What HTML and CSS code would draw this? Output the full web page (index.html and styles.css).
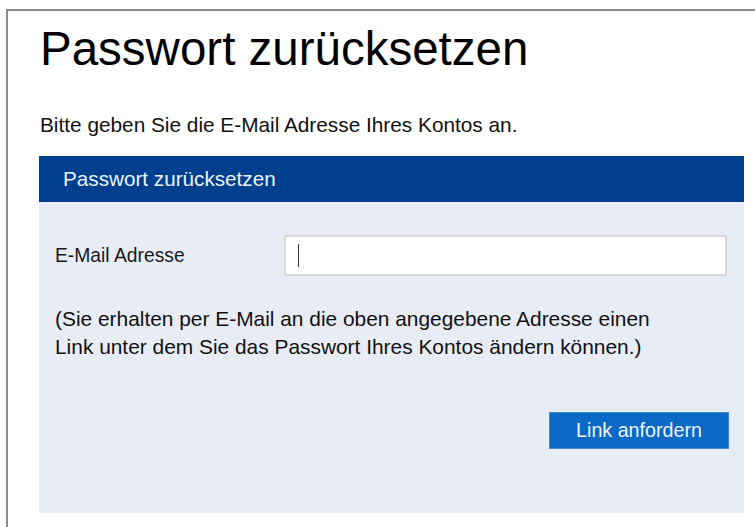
FILE: index.html
```html
<!DOCTYPE html>
<html lang="de">
<head>
<meta charset="utf-8">
<title>Passwort zurücksetzen</title>
<link rel="stylesheet" href="styles.css">
</head>
<body>
<div class="frame">
  <h1 class="title">Passwort zurücksetzen</h1>
  <p class="intro">Bitte geben Sie die E-Mail Adresse Ihres Kontos an.</p>
  <section class="panel">
    <div class="panel-head">Passwort zurücksetzen</div>
    <div class="panel-body">
      <div class="row">
        <label class="label" for="email">E-Mail Adresse</label>
        <div class="field" id="email"><span class="caret"></span></div>
      </div>
      <p class="note">(Sie erhalten per E-Mail an die oben angegebene Adresse einen<br>Link unter dem Sie das Passwort Ihres Kontos ändern können.)</p>
      <div class="actions">
        <button class="btn" type="button">Link anfordern</button>
      </div>
    </div>
  </section>
</div>
</body>
</html>
```

FILE: styles.css
```css
html, body {
  margin: 0;
  padding: 0;
  background: #ffffff;
  height: 100%;
}

body {
  font-family: "Liberation Sans", Arial, sans-serif;
  color: #111111;
  overflow: hidden;
}

.frame {
  box-sizing: border-box;
  height: calc(100% - 9px);
  margin: 9px 0 0 6px;
  border-top: 2px solid #8c8c8c;
  border-left: 2px solid #8c8c8c;
  padding: 10px 11px 0 31px;
}

.title {
  margin: 0;
  font-size: 47.5px;
  line-height: 56px;
  font-weight: normal;
  color: #000000;
  padding-left: 1px;
}

.intro {
  margin: 36px 0 19px;
  font-size: 20.8px;
  line-height: 24px;
  color: #111111;
  padding-left: 1px;
}

.panel {
  background: #e8ecf4;
}

.panel-head {
  background: #003f8e;
  color: #eef2fa;
  height: 46px;
  display: flex;
  align-items: center;
  padding-left: 24px;
  font-size: 20.7px;
}

.panel-body {
  padding: 33px 17px 64px 16px;
}

.row {
  display: flex;
  align-items: center;
}

.label {
  width: 229px;
  font-size: 19.3px;
  color: #1a1a1a;
}

.field {
  flex: 1;
  height: 37px;
  background: #ffffff;
  border: 2px solid #d8d8d8;
  display: flex;
  align-items: center;
  padding-left: 12px;
}

.caret {
  width: 1px;
  height: 23px;
  background: #333333;
}

.note {
  margin: 29px 0 0;
  font-size: 20.9px;
  line-height: 28px;
  color: #111111;
}

.actions {
  display: flex;
  justify-content: flex-end;
  margin-top: 51px;
}

.btn {
  width: 180px;
  height: 37px;
  margin-right: -2px;
  background: #0b69c6;
  border: 1px solid #3f8ad8;
  color: #eef4fc;
  font-family: "Liberation Sans", Arial, sans-serif;
  font-size: 19.7px;
  padding: 0;
  cursor: pointer;
}
```
